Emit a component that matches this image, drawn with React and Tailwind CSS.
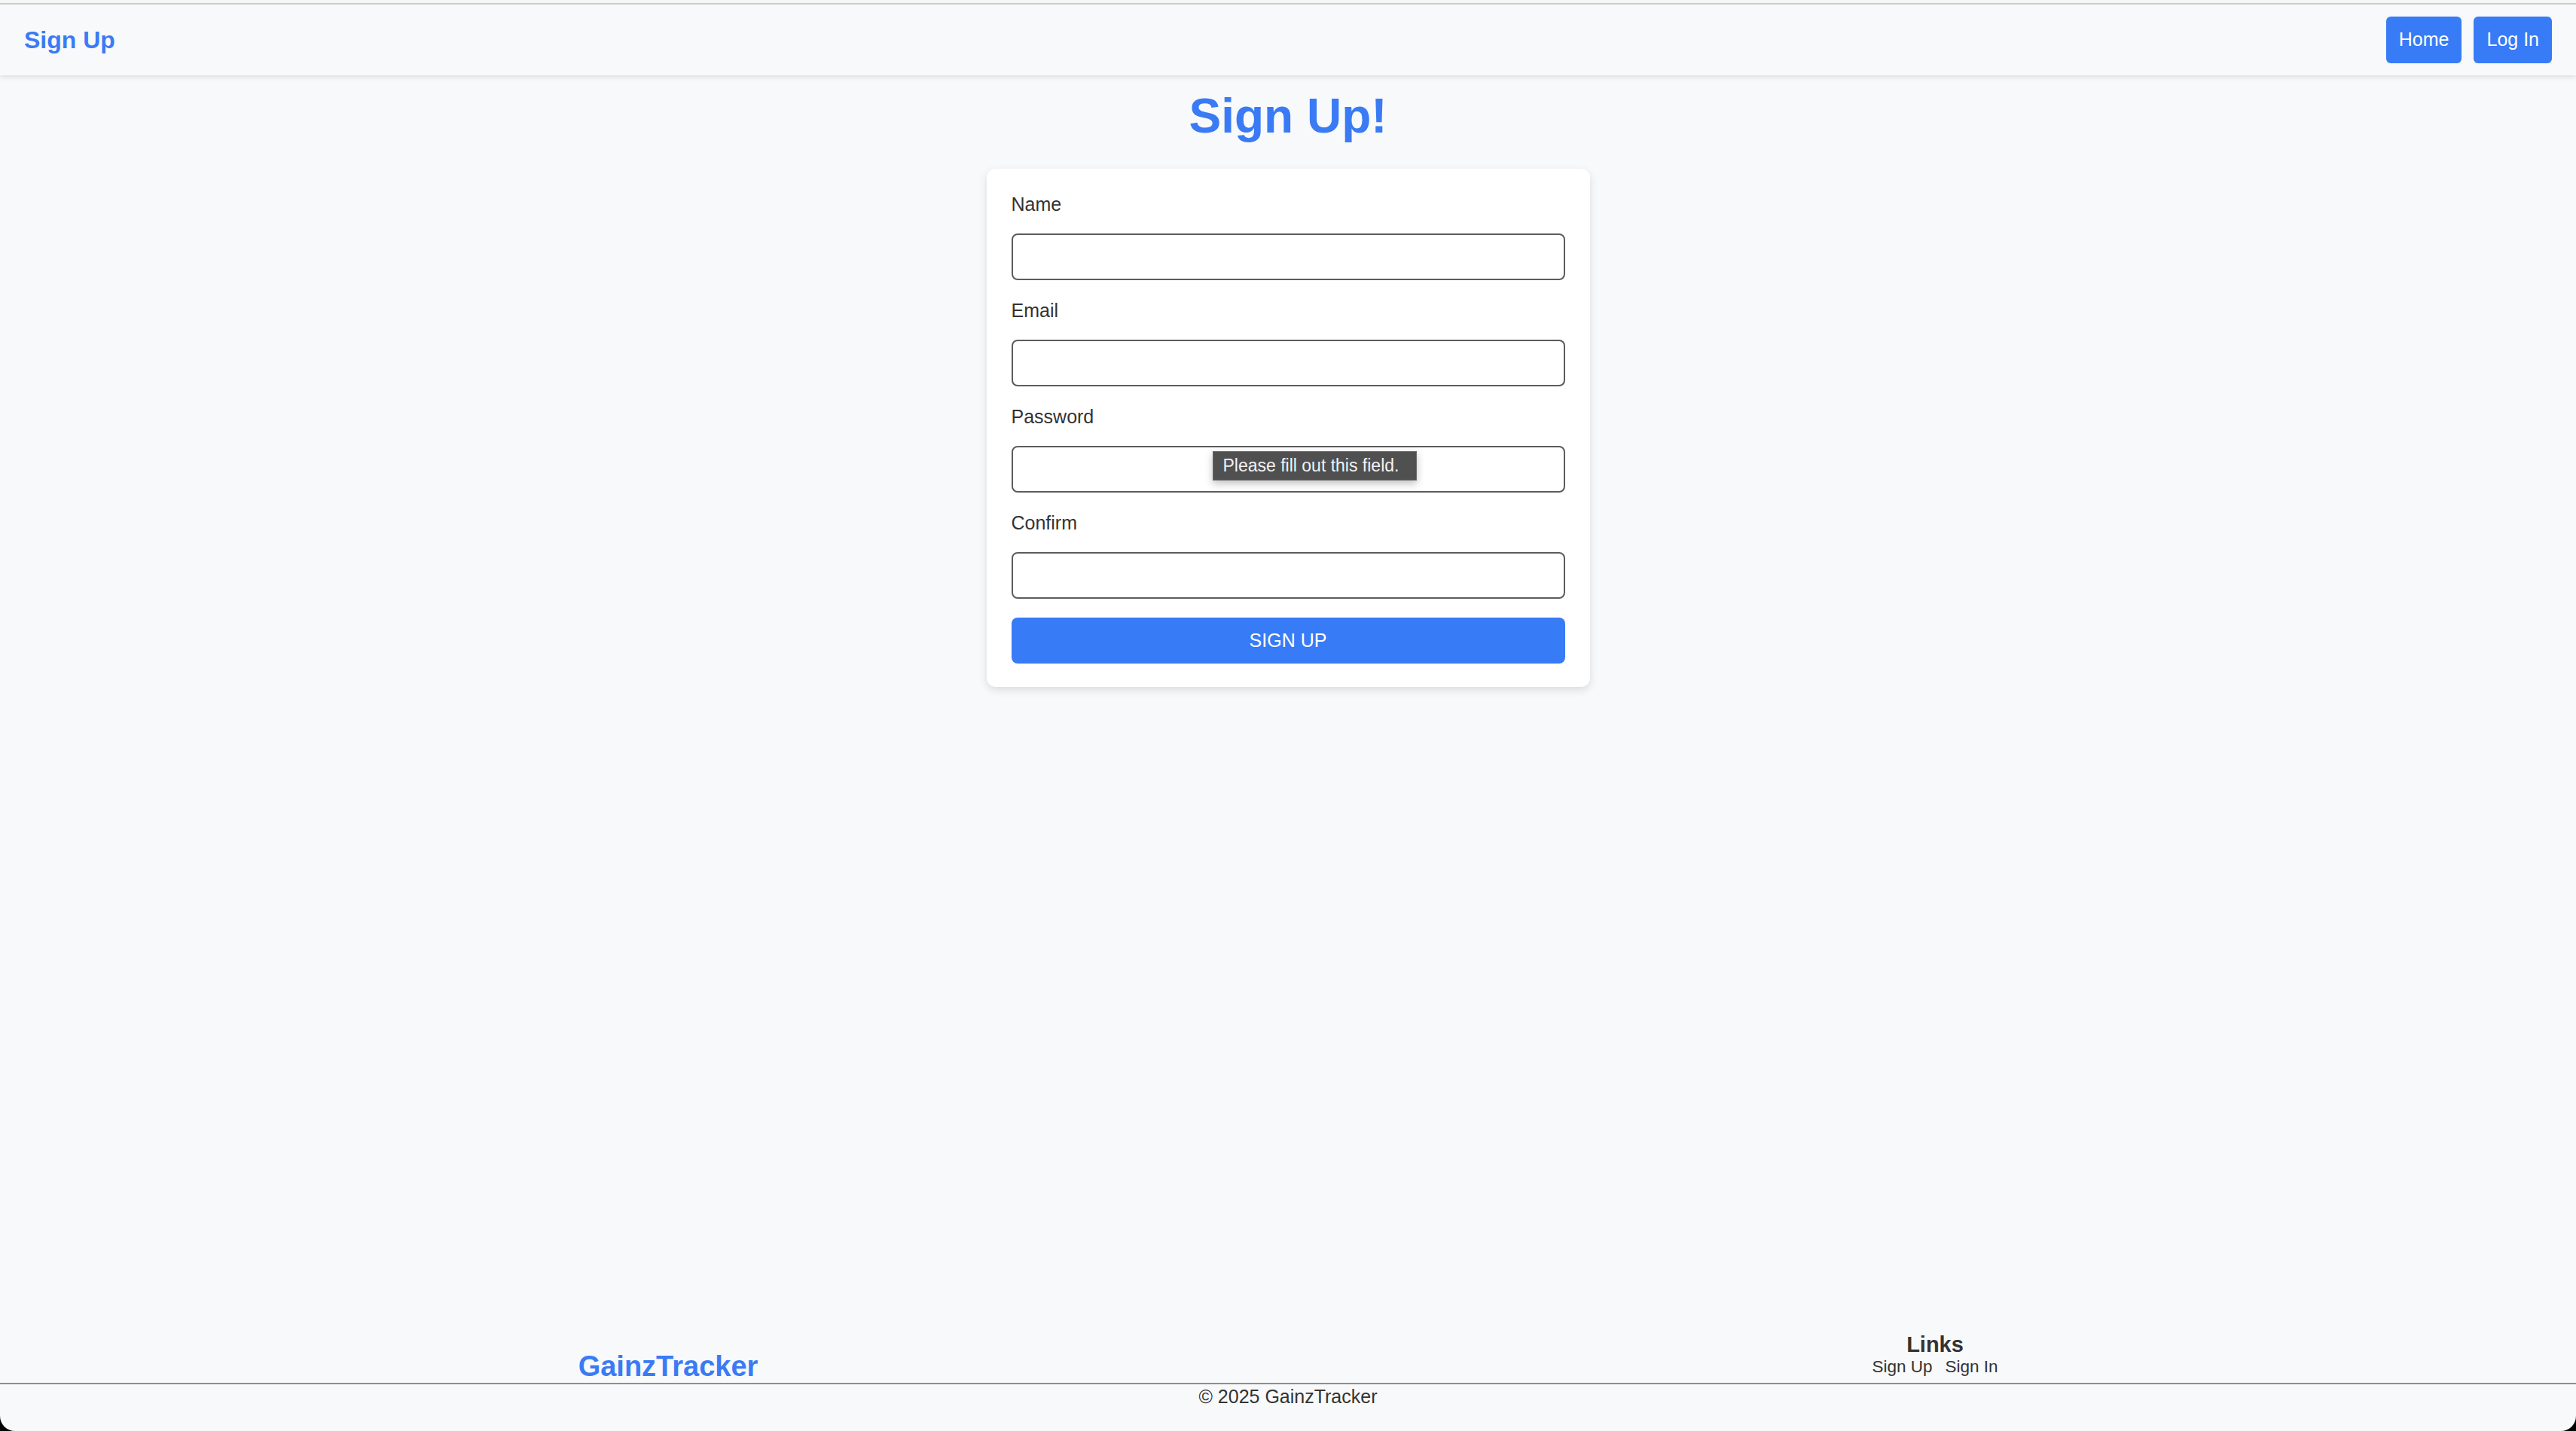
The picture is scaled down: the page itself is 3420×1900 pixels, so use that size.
export default function App() {
  const fields = ['Name', 'Email', 'Password', 'Confirm']

  return (
    <div className="w-[3420px] h-[1900px] bg-black font-['Liberation_Sans',Arial,sans-serif]">
      <div className="h-full flex flex-col bg-[#f8f9fa] rounded-b-[20px] overflow-hidden">
        {/* window top edge */}
        <div className="h-[4px] bg-[#f6f6f6]" />
        <div className="h-[2px] bg-[#cdcdcd]" />

        {/* navbar */}
        <nav className="relative z-10 h-[94px] flex items-center justify-between pl-[32px] pr-[32px] bg-[#f8f9fa] shadow-[0_3px_6px_rgba(0,0,0,0.1)]">
          <a className="text-[32px] font-bold text-[#3a7bf5]">Sign Up</a>
          <div className="flex items-center gap-[16px]">
            <button className="h-[62px] px-[17px] rounded-[6px] bg-[#377bf6] text-white text-[25px]">Home</button>
            <button className="h-[62px] px-[17px] rounded-[6px] bg-[#377bf6] text-white text-[25px]">Log In</button>
          </div>
        </nav>

        {/* main */}
        <main className="flex-1 flex flex-col items-center">
          <h1 className="mt-[17px] text-[64px] leading-[normal] font-bold text-[#3a7bf5]">Sign Up!</h1>

          <form className="mt-[33px] w-[801px] bg-white rounded-[12px] pt-[33px] px-[33px] pb-[31px] shadow-[0_4px_12px_rgba(0,0,0,0.12)] flex flex-col">
            {fields.map((f) => (
              <div key={f} className={f === 'Confirm' ? 'flex flex-col mb-[25px]' : 'flex flex-col mb-[26px]'}>
                <label className="text-[25px] leading-[29px] text-[#333]">{f}</label>
                <div className="relative mt-[24px]">
                  <input
                    type={f === 'Password' || f === 'Confirm' ? 'password' : 'text'}
                    className="w-full h-[62px] bg-white border-2 border-[#5c5c5c] rounded-[8px] px-3 text-[25px]"
                  />
                  {f === 'Password' && (
                    <div className="absolute left-[267px] top-[7px] h-[39px] w-[271px] flex items-center px-[13px] bg-[#505050] border border-[#6a6a6a] text-[#f2f2f2] text-[23px] shadow-[0_4px_10px_rgba(0,0,0,0.25)] whitespace-nowrap">
                      Please fill out this field.
                    </div>
                  )}
                </div>
              </div>
            ))}
            <button className="h-[61px] w-full rounded-[8px] bg-[#377bf6] text-white text-[25px]">SIGN UP</button>
          </form>
        </main>

        {/* footer */}
        <footer>
          <div className="grid grid-cols-2 items-end pl-[46px] pr-[10px]">
            <div className="flex justify-center">
              <span className="text-[38px] leading-[normal] font-bold text-[#3a7bf5]">GainzTracker</span>
            </div>
            <div className="flex flex-col items-center pb-[8px] text-[#333]">
              <span className="text-[29px] leading-[normal] font-bold">Links</span>
              <div className="flex gap-[17px] text-[22.5px] leading-[normal]">
                <a>Sign Up</a>
                <a>Sign In</a>
              </div>
            </div>
          </div>
          <div className="border-t-2 border-[#8e8e8e] pt-[2px] pb-[31px] text-center text-[25px] leading-[29px] text-[#333]">
            © 2025 GainzTracker
          </div>
        </footer>
      </div>
    </div>
  )
}
